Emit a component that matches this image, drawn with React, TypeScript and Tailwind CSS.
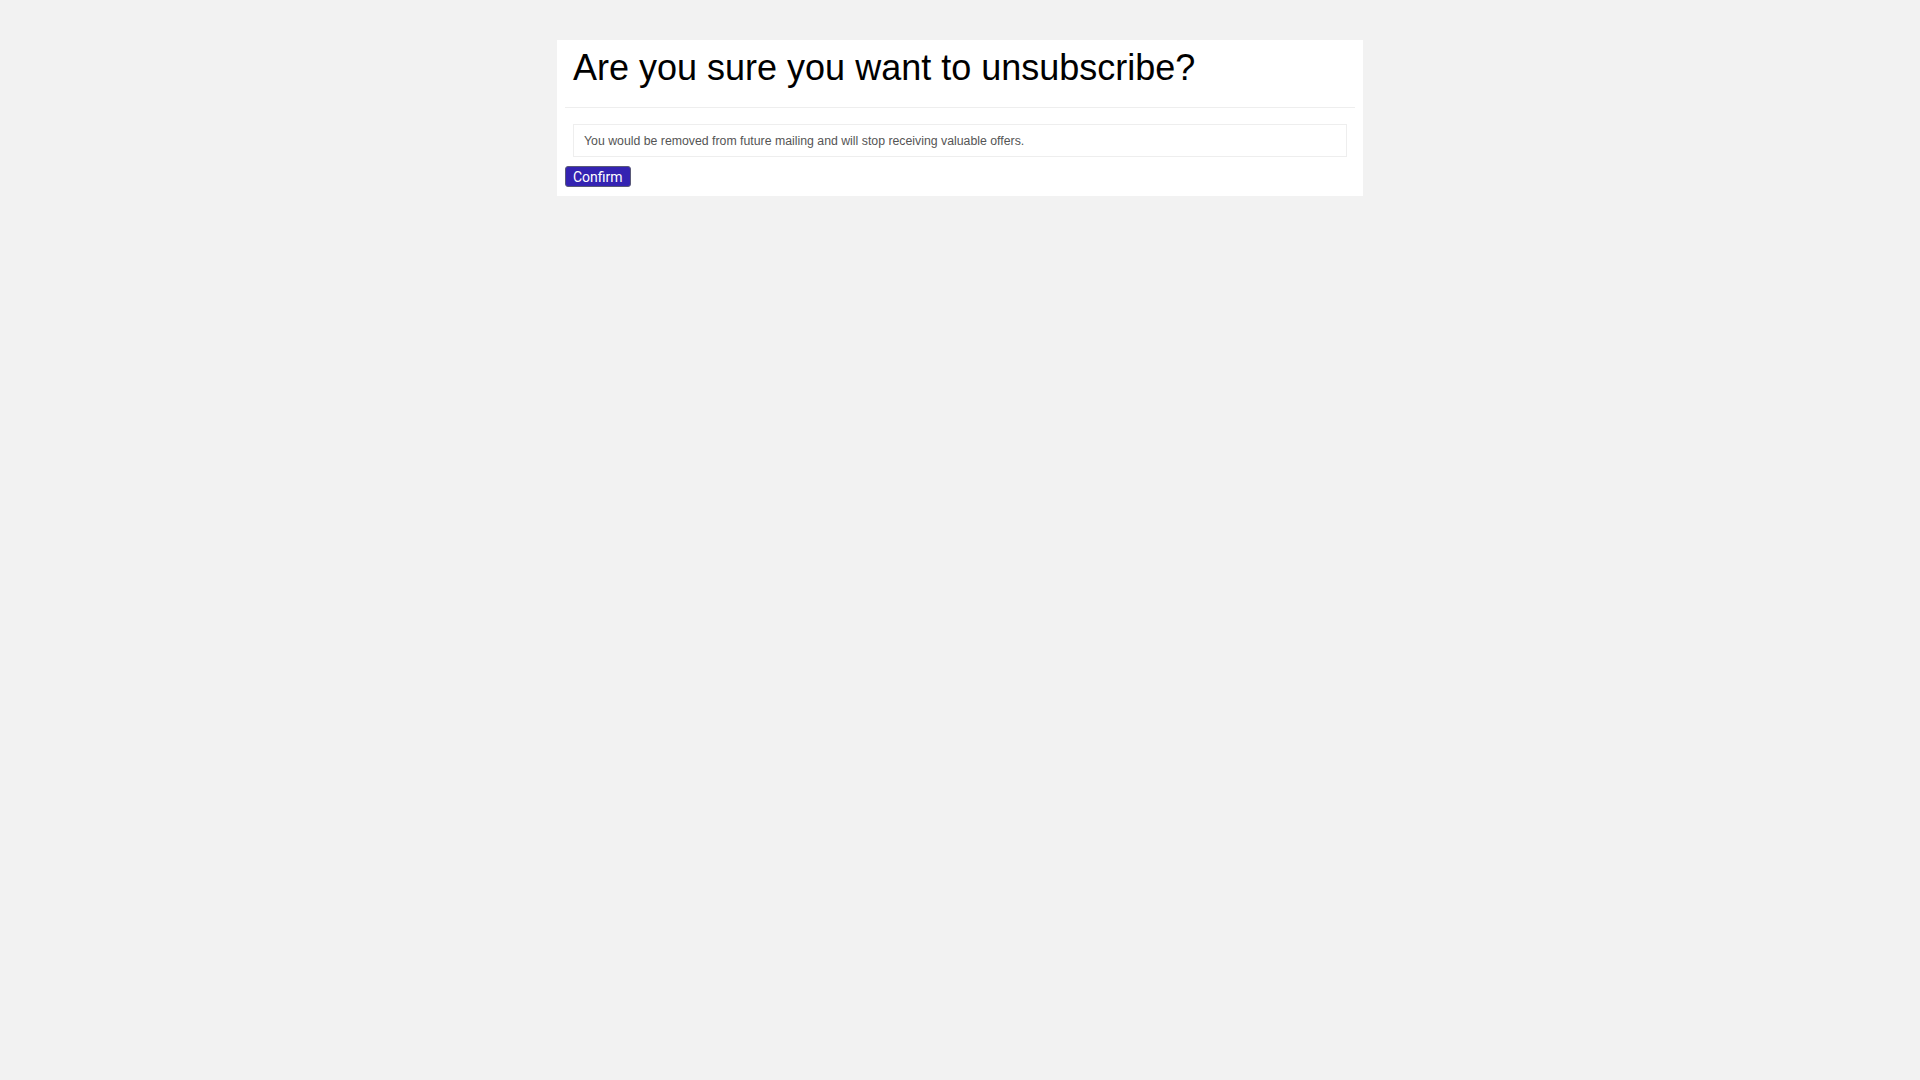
import React from 'react';

export default function App() {
  return (
    <div className="min-h-screen bg-[#f2f2f2] pt-10 font-['Liberation_Sans',Arial,sans-serif]">
      <div className="mx-auto w-[806px] bg-white p-2">
        <h1 className="px-2 pt-0 pb-[19px] text-[36px] leading-[40px] text-black">
          Are you sure you want to unsubscribe?
        </h1>
        <hr className="border-0 border-t border-[#eeeeee]" />
        <div className="mx-2 mt-4 border border-[#eeeeee] px-[10px] pt-[9px] pb-[7px] text-[12.3px] leading-[15px] text-[#555555]">
          You would be removed from future mailing and will stop receiving valuable offers.
        </div>
        <button className="mt-[9px] mb-px block h-[21px] rounded-[3px] border border-[#5a5a78] bg-[#3423b2] px-[7px] pt-px font-['Roboto',Arial,sans-serif] text-[14px] leading-[18px] text-white">
          Confirm
        </button>
      </div>
    </div>
  );
}
